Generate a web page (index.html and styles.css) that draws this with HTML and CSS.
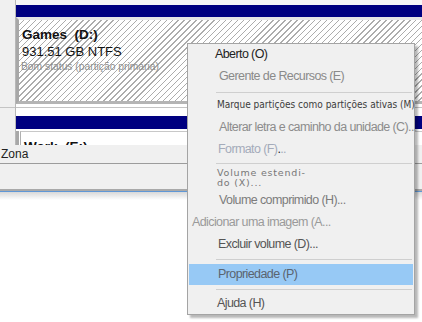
FILE: index.html
```html
<!DOCTYPE html>
<html>
<head>
<meta charset="utf-8">
<link rel="stylesheet" href="styles.css">
</head>
<body>
<div class="screen">
  <div class="disks">
    <div class="side"><div class="side-line"></div></div>
    <div class="main">
      <div class="topgap"></div>
      <div class="bar"></div>
      <div class="part hatched">
        <div class="name">Games&nbsp; (D:)</div>
        <div class="size">931.51 GB NTFS</div>
        <div class="status">Bom status (partição primária)</div>
      </div>
      <div class="gap"></div>
      <div class="bar bar2"></div>
      <div class="part2">
        <div class="name">Work&nbsp; (E:)</div>
      </div>
    </div>
  </div>
  <div class="legend">Zona</div>
  <div class="legend-body"></div>
  <div class="rule-gray"></div>
  <div class="rule-blue"></div>
  <div class="fade"></div>

  <div class="menu">
    <div class="item i-aberto">Aberto (O)</div>
    <div class="item i-gerente">Gerente de Recursos (E)</div>
    <div class="sep s1"></div>
    <div class="item i-marque">Marque partições como partições ativas (M)</div>
    <div class="item i-alterar">Alterar letra e caminho da unidade (C)...</div>
    <div class="item i-formato">Formato (F)<span class="dot">.</span>..</div>
    <div class="sep s2"></div>
    <div class="item i-estendido">Volume estendi-<br>do (X)...</div>
    <div class="item i-comprimido">Volume comprimido (H)...</div>
    <div class="item i-adicionar">Adicionar uma imagem (A...</div>
    <div class="item i-excluir">Excluir volume (D)...</div>
    <div class="sep s3"></div>
    <div class="item i-prop">Propriedade (P)</div>
    <div class="sep s4"></div>
    <div class="item i-ajuda">Ajuda (H)</div>
  </div>
</div>
</body>
</html>
```

FILE: styles.css
```css
html, body {
  margin: 0;
  padding: 0;
  background: #ffffff;
}
body {
  font-family: "Liberation Sans", Arial, sans-serif;
  width: 422px;
  height: 322px;
  overflow: hidden;
}
.screen {
  position: relative;
  width: 422px;
  height: 322px;
  background: #ffffff;
}
.disks {
  display: flex;
  height: 145px;
  overflow: hidden;
}
.side {
  width: 15px;
  background: #f0f0f0;
  border-right: 1px solid #b8b8b8;
  flex: none;
}
.side-line {
  margin-top: 107px;
  height: 1px;
  background: #c4c4c4;
}
.main {
  flex: 1;
  background: #ffffff;
}
.topgap {
  height: 5px;
  background: #f7f7f7;
}
.bar {
  height: 12px;
  background: #000080;
}
.part {
  border-top: 3px solid #e6e6e6;
  border-left: 3px solid #a8a8a8;
  border-bottom: 3px solid #b4b4b4;
  padding: 7px 0 0 3px;
  height: 74px;
}
.hatched {
  background-color: #ffffff;
  background-image: repeating-linear-gradient(135deg, #ffffff 0px, #ffffff 3.2px, #acacac 3.2px, #acacac 4.2px);
}
.name {
  font-weight: bold;
  font-size: 13.5px;
  line-height: 16px;
  color: #111;
}
.size {
  font-size: 13px;
  line-height: 17px;
  color: #111;
}
.status {
  font-size: 10.3px;
  line-height: 14px;
  color: #8e8e8e;
  margin-left: -1px;
}
.gap {
  height: 8px;
  margin-top: 3px;
  border-top: 1px solid #c4c4c4;
}
.bar2 {
  height: 13px;
}
.part2 {
  margin-top: 2px;
  border-left: 3px solid #a8a8a8;
  padding-left: 1px;
}
.part2 .name {
  border-left: 1px solid #b0b0b0;
  border-top: 1px solid #c8c8c8;
  padding: 7px 0 0 3px;
}
.legend {
  height: 18px;
  line-height: 18px;
  background: #f0f0f0;
  border-bottom: 1px solid #9c9c9c;
  font-size: 12px;
  color: #222;
  padding-left: 1px;
}
.legend-body {
  height: 25px;
  background: #f0f0f0;
}
.rule-gray {
  height: 2px;
  background: #a9a9a9;
}
.rule-blue {
  height: 1px;
  background: #5f97d6;
}
.fade {
  height: 8px;
  background: linear-gradient(#d8d8d8, #ffffff);
}

/* context menu */
.menu {
  position: absolute;
  left: 187px;
  top: 43px;
  width: 228px;
  box-sizing: border-box;
  background: #f0f0f0;
  border: 1px solid #a4a4a4;
  box-shadow: 3px 3px 2px rgba(0, 0, 0, 0.28);
  padding-bottom: 1px;
}
.item {
  font-family: "Liberation Sans", sans-serif;
  font-size: 12.5px;
  letter-spacing: -0.6px;
  white-space: nowrap;
  color: #888;
  box-sizing: border-box;
}
.i-aberto { height: 21px; line-height: 21px; padding-left: 27px; color: #222; }
.i-gerente { height: 22px; line-height: 22px; padding-left: 31px; color: #8a8a8a; }
.i-marque {
  height: 19px; line-height: 15px; padding-left: 29px;
  font-family: "DejaVu Sans Condensed", "Liberation Sans", sans-serif;
  font-size: 10px; letter-spacing: 0; color: #3c3c3c;
}
.i-alterar { height: 22px; line-height: 22px; padding-left: 31px; color: #8c8c8c; }
.i-formato { height: 22px; line-height: 22px; padding-left: 30px; color: #a4abba; }
.dot { color: #222; }
.i-estendido {
  height: 23px; padding-top: 2px; line-height: 10px; padding-left: 29px;
  font-family: "DejaVu Sans", sans-serif; font-size: 9.5px; letter-spacing: 0.8px; color: #777;
}
.i-comprimido { height: 22px; line-height: 22px; padding-left: 31px; color: #7c7c7c; }
.i-adicionar { height: 22px; line-height: 22px; padding-left: 4px; color: #9a9a9a; }
.i-excluir { height: 22px; line-height: 22px; padding-left: 30px; color: #555; }
.i-prop {
  height: 21px; line-height: 21px; padding-left: 29px;
  margin: 0 1px; background: #97c9f5; color: #5a6470;
}
.i-ajuda { height: 20px; line-height: 20px; padding-left: 29px; color: #555; }

.sep {
  display: flex;
  align-items: center;
  padding: 0 2px 0 28px;
}
.sep::after {
  content: "";
  flex: 1;
  height: 1px;
  background: #cfcfcf;
}
.s1 { height: 10px; }
.s2 { height: 6px; }
.s3 { height: 9px; }
.s4 { height: 8px; }
```
